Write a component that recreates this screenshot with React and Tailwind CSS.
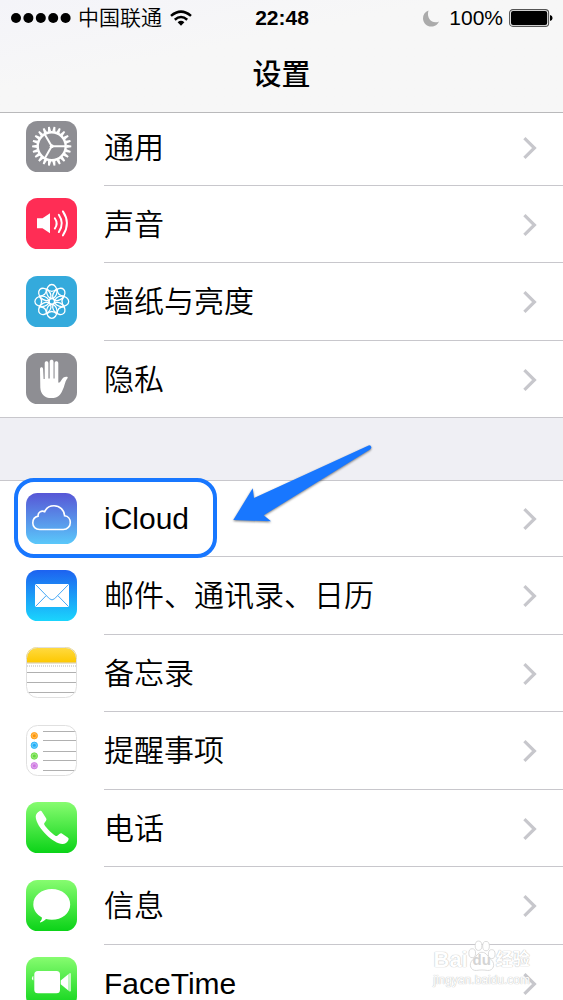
import React from "react";

const GREY = "#8e8e93";
const around = (count) => Array.from({ length: count }, (_, i) => (360 / count) * i);

function Tile({ id, from, to, outlined, children }) {
  return (
    <svg viewBox="0 0 51 51" className="size-[51px] shrink-0" aria-hidden="true">
      <defs>
        <linearGradient id={id + "-fill"} x1="0" y1="0" x2="0" y2="1">
          <stop offset="0" stopColor={from} />
          <stop offset="1" stopColor={to} />
        </linearGradient>
        <clipPath id={id + "-clip"}>
          <rect width="51" height="51" rx="11.5" />
        </clipPath>
      </defs>
      <g clipPath={`url(#${id}-clip)`}>
        <rect width="51" height="51" fill={`url(#${id}-fill)`} />
        {children}
      </g>
      {outlined && (
        <rect x="0.5" y="0.5" width="50" height="50" rx="11" fill="none" stroke="#e0e0e0" />
      )}
    </svg>
  );
}

function GeneralIcon() {
  return (
    <Tile id="general" from={GREY} to={GREY}>
      <g transform="translate(25.7 25.3)" fill="none" stroke="#fff">
        <circle r="14" strokeWidth="2.4" />
        {around(22).map((a) => (
          <path key={a} d="M14.6 -1.6L19.6 -.9V.9L14.6 1.6Z" fill="#fff" stroke="none" transform={`rotate(${a})`} />
        ))}
        {[0, 120, 240].map((a) => (
          <path key={a} d="M0 0H14" strokeWidth="2" transform={`rotate(${a})`} />
        ))}
        <circle r="2" fill="#fff" stroke="none" />
      </g>
    </Tile>
  );
}

function SoundIcon() {
  return (
    <Tile id="sound" from="#ff2d55" to="#ff2d55">
      <path d="M11 20.3H16.5L24 15.2V35.2L16.5 30.3H11Z" fill="#fff" />
      <g fill="none" stroke="#fff" strokeWidth="1.9" strokeLinecap="round">
        <path d="M28.8 20.2Q32.5 25.4 28.8 30.6" />
        <path d="M32.8 16.7Q38.8 25.4 32.8 34.1" />
        <path d="M36.9 13.4Q45 25.4 36.9 37.4" />
      </g>
    </Tile>
  );
}

function WallpaperIcon() {
  return (
    <Tile id="wallpaper" from="#34aadc" to="#34aadc">
      <g transform="translate(25.8 25.4)" fill="none" stroke="#fff" strokeWidth="1.3">
        <circle r="2.7" />
        {around(8).map((a) => (
          <g key={a} transform={`rotate(${a})`}>
            <ellipse cx="9.9" rx="7" ry="5.2" />
            <path d="M12.5 -4.9Q7.6 0 12.5 4.9" />
          </g>
        ))}
      </g>
    </Tile>
  );
}

function PrivacyIcon() {
  return (
    <Tile id="privacy" from={GREY} to={GREY}>
      <path
        fill="#fff"
        d="M14 16C14 13.5 17 13.5 17.1 16L17.6 26H18.7V10.2C18.8 7.6 22.3 7.6 22.4 10.2V25.5H23.7V8.7C23.8 6.1 27.4 6.1 27.5 8.7V25.5H28.6V10.2C28.7 7.7 32.2 7.7 32.3 10.2V29.6C33.3 30 34.4 28.9 35.3 27.2C36.7 24.5 38.7 23.4 41 23.7C42 23.9 41.9 24.9 41.1 25.7C39 28.3 38.7 33 36.2 38C34 43 30.5 45.1 25.5 45.1C18.5 45.1 14.7 41.2 14.3 34.5Z"
      />
    </Tile>
  );
}

function CloudIcon() {
  return (
    <Tile id="cloud" from="#5756d6" to="#5ac8fa">
      <path
        d="M13.5 36.5C9.5 36.5 6.8 33.6 6.8 29.9C6.8 26.6 9 23.8 12.1 23.1C11.6 19.5 15.5 17 18.7 18.7C20.3 14.9 23.9 12.8 28 12.8C33.8 12.8 38.3 17 38.6 22.8C42.1 23.2 44.3 26 44.3 29.4C44.3 33.3 41.4 36.5 37.3 36.5Z"
        fill="none"
        stroke="#fff"
        strokeWidth="1.6"
      />
    </Tile>
  );
}

function MailIcon() {
  return (
    <Tile id="mail" from="#1d62f0" to="#1ad5fd">
      <rect x="9" y="14" width="34" height="23" rx="1" fill="#fff" />
      <path d="M9.5 14.5L23.4 28.7Q26 31.2 28.6 28.7L42.5 14.5M9.5 36.5L20 25.8M42.5 36.5L32 25.8" fill="none" stroke="#2f9df5" strokeWidth="0.9" />
    </Tile>
  );
}

function NotesIcon() {
  return (
    <Tile id="notes" from="#fff" to="#fff" outlined>
      <defs>
        <linearGradient id="notes-band" x1="0" y1="0" x2="0" y2="1">
          <stop offset="0" stopColor="#ffdb44" />
          <stop offset="1" stopColor="#fdc800" />
        </linearGradient>
      </defs>
      <rect width="51" height="15.6" fill="url(#notes-band)" />
      <path d="M0 16H51" stroke="#c9b98b" strokeWidth="0.8" />
      <path d="M1 19H50" stroke="#b5b5b5" strokeDasharray="1 1" />
      <path d="M0 25.5H51M0 35.5H51M0 45.5H51" stroke="#b0b0b0" />
    </Tile>
  );
}

function RemindersIcon() {
  const dots = [
    [10.7, "#ff9500"],
    [20.3, "#1badf8"],
    [31, "#63da38"],
    [40.7, "#cc73e1"],
  ];
  return (
    <Tile id="reminders" from="#fff" to="#fff" outlined>
      {dots.map(([y, color]) => (
        <g key={y}>
          <circle cx="8.3" cy={y} r="3.2" fill={color} fillOpacity="0.65" stroke={color} strokeWidth="0.8" />
          <circle cx="8.3" cy={y} r="1.5" fill={color} />
        </g>
      ))}
      <path d="M17 6.5H51M17 15.5H51M17 26.5H51M17 35.5H51M17 45.5H51" stroke="#b0b0b0" />
    </Tile>
  );
}

function PhoneIcon() {
  return (
    <Tile id="phone" from="#87fc70" to="#0bd318">
      <path
        fill="#fff"
        d="M13.4 9.3C11.4 10.5 9.7 12.3 9.7 14.8C9.9 20 14.6 27.3 20.3 32.8C25.8 38.1 32 42.1 36.5 42C39.1 41.9 41.3 40.3 42.3 38.2C42.9 37 42.6 36.3 41.7 35.6L36.2 31.8C35.1 31.1 34.3 31.2 33.4 32L31.3 33.7C30.5 34.3 29.8 34.1 29 33.5C25.5 31 20.4 25.9 18.5 22.9C18 22.1 18 21.5 18.6 20.8L20 18.7C20.6 17.9 20.6 17.2 20.1 16.3L16.1 9.9C15.3 8.7 14.5 8.6 13.4 9.3Z"
      />
    </Tile>
  );
}

function MessagesIcon() {
  return (
    <Tile id="messages" from="#87fc70" to="#0bd318">
      <path
        fill="#fff"
        d="M25.8 9C36 9 44.2 15.6 44.2 24.4S36 39.8 25.8 39.8C23.7 39.8 21.8 39.6 20 39.1C18.2 40.9 16 42.2 14.3 42.4C13.8 42.4 13.8 42 14.2 41.6C15.3 40.5 16 39 15.9 37.4C10.7 34.6 7.3 29.9 7.3 24.4C7.3 15.6 15.6 9 25.8 9Z"
      />
    </Tile>
  );
}

function FaceTimeIcon() {
  return (
    <Tile id="facetime" from="#87fc70" to="#0bd318">
      <rect x="8.3" y="14" width="25.7" height="22.3" rx="3.5" fill="#fff" />
      <path d="M7.3 19V23.5Q6 23.2 6 21.3T7.3 19Z" fill="#fff" />
      <path d="M34.7 23.5L42 17.4V33.2L34.7 27.2Z" fill="#fff" />
      <path d="M42 17.4L43.5 16.2Q45 15.6 45 17.4V33.4Q45 35 43.5 34.4L42 33.2Z" fill="#fff" fillOpacity="0.65" />
    </Tile>
  );
}

const groups = [
  [
    ["通用", GeneralIcon],
    ["声音", SoundIcon],
    ["墙纸与亮度", WallpaperIcon],
    ["隐私", PrivacyIcon],
  ],
  [
    ["iCloud", CloudIcon],
    ["邮件、通讯录、日历", MailIcon],
    ["备忘录", NotesIcon],
    ["提醒事项", RemindersIcon],
    ["电话", PhoneIcon],
    ["信息", MessagesIcon],
    ["FaceTime", FaceTimeIcon],
  ],
];

function Chevron() {
  return (
    <svg viewBox="0 0 14 22" className="h-[22px] w-[14px] shrink-0" aria-hidden="true">
      <path d="M1.4 1.2L11.4 11L1.4 20.8" fill="none" stroke="#c7c7cc" strokeWidth="3.2" />
    </svg>
  );
}

function Callout() {
  return (
    <div className="pointer-events-none absolute inset-0 z-10" aria-hidden="true">
      <div className="absolute -top-[3px] left-3.5 h-20 w-[203px] rounded-[20px] border-4 border-[#1877ff]" />
      <svg viewBox="0 0 144 84" className="absolute left-[230px] -top-[37px] h-[84px] w-36 drop-shadow-[0_1px_1px_rgba(0,0,0,0.5)]">
        <path d="M3.3 76L22.7 44.3L24 54L138.6 1.4Q141 1 141.4 3.3Q141.3 4.8 140 5.5L33.7 71.3L41 77.3Z" fill="#1877ff" />
      </svg>
    </div>
  );
}

function Row({ label, Icon, tall, first, last, marked }) {
  return (
    <li
      className={
        "relative border-[#c8c7cc] " +
        (tall ? "h-[78px] " : "h-[77px] ") +
        (first ? "border-t" : last ? "border-b" : "")
      }
    >
      <a href="#" className="flex h-full items-center pl-[26px]">
        <span className="pb-0.5">
          <Icon />
        </span>
        <span
          className={
            "ml-[27px] flex h-full flex-1 items-center justify-between border-[#c8c7cc] pt-px pr-[26px] " +
            (last ? "" : "border-b")
          }
        >
          <span className="text-[30px] leading-9">{label}</span>
          <Chevron />
        </span>
      </a>
      {marked && <Callout />}
    </li>
  );
}

function StatusBar() {
  return (
    <div className="grid h-9 grid-cols-[1fr_auto_1fr] items-center pr-2.5 pl-[11px] text-[21px] leading-6">
      <div className="flex items-center">
        <svg viewBox="0 0 60 10" className="h-2.5 w-[60px]" aria-label="信号">
          {[0, 1, 2, 3, 4].map((i) => (
            <circle key={i} cx={5 + i * 12.4} cy="5" r="5" />
          ))}
        </svg>
        <span className="ml-[7px] font-[350]">中国联通</span>
        <svg viewBox="0 0 22 16" className="ml-2 h-4 w-[22px]" aria-label="无线网络">
          <g fill="none" stroke="#000" strokeWidth="2.5">
            <path d="M1 5.9Q11 -2.6 21 5.9" />
            <path d="M4.8 9.7Q11 4.2 17.2 9.7" />
          </g>
          <path d="M7.6 12.2Q11 9.4 14.4 12.2L11 15.7Z" />
        </svg>
      </div>
      <span className="font-bold">22:48</span>
      <div className="flex items-center justify-end">
        <svg viewBox="0 0 16 17" className="mr-2.5 h-[17px] w-4" aria-label="勿扰模式">
          <path d="M5.5 .5C2 1.8 0 4.8 0 8.2C0 13 3.8 16.5 8.3 16.5C11.8 16.5 14.8 14.4 16 11.4C10.4 14.6 2.8 9.2 5.5 .5Z" fill="#ababab" />
        </svg>
        <span>100%</span>
        <svg viewBox="0 0 44 18" className="ml-1.5 h-[18px] w-11" aria-label="电池">
          <rect x="0.6" y="0.6" width="39" height="16.8" rx="3.2" fill="none" stroke="#555" strokeWidth="1.1" />
          <rect x="2" y="2" width="36.2" height="14" rx="2" />
          <path d="M41 6Q43.6 6.6 43.6 9T41 12Z" />
        </svg>
      </div>
    </div>
  );
}

function Watermark() {
  return (
    <div
      className="pointer-events-none absolute right-[33px] bottom-3 z-10 flex flex-col items-center text-white [text-shadow:0_0_1px_#bbb,0_0_1px_#ccc]"
      aria-hidden="true"
    >
      <div className="flex items-center text-[22px] leading-6 font-bold">
        <span>Bai</span>
        <span className="relative flex w-7 justify-center text-[15px]">
          <svg viewBox="0 0 30 34" className="absolute -top-2 left-0 h-8 w-7">
            <g fill="#fff" stroke="#d4d4d4" strokeWidth="0.9">
              <ellipse cx="4.5" cy="14" rx="3.6" ry="4.8" />
              <ellipse cx="11.3" cy="6" rx="3.6" ry="5" />
              <ellipse cx="19.3" cy="6.4" rx="3.6" ry="5" />
              <ellipse cx="25.4" cy="15" rx="3.6" ry="4.8" />
              <path d="M15 13C20 13 21 18 25 21C30 26 27 33 21 32.5C17 31.8 13 31.8 9 32.5C3 33 0 26 5 21C9 18 10 13 15 13Z" />
            </g>
          </svg>
          <span className="relative text-[#d4d4d4] [text-shadow:none]">du</span>
        </span>
        <span className="text-[17px]">经验</span>
      </div>
      <span className="text-[12px] leading-4">jingyan.baidu.com</span>
    </div>
  );
}

export default function App() {
  return (
    <div className="relative flex h-screen flex-col overflow-hidden bg-[#efeff4] font-['Liberation_Sans','Noto_Sans_CJK_SC',sans-serif] text-black">
      <header className="relative z-20 shrink-0 border-b border-[#b9b9bb] bg-[#f7f7f7] bg-linear-to-br from-[#f4f4f9] to-[#f7f7f7] to-40%">
        <StatusBar />
        <h1 className="pt-[21px] pb-[19px] text-center text-[29px] leading-9 font-medium">设置</h1>
      </header>
      <main className="-mt-[5px] flex min-h-0 flex-1 flex-col gap-[62px] font-[350]">
        {groups.map((rows, g) => (
          <ul key={g} className="shrink-0 bg-white">
            {rows.map(([label, Icon], i) => (
              <Row
                key={label}
                label={label}
                Icon={Icon}
                tall={i % 2 === g}
                first={i === 0}
                last={i === rows.length - 1}
                marked={label === "iCloud"}
              />
            ))}
          </ul>
        ))}
      </main>
      <Watermark />
    </div>
  );
}
